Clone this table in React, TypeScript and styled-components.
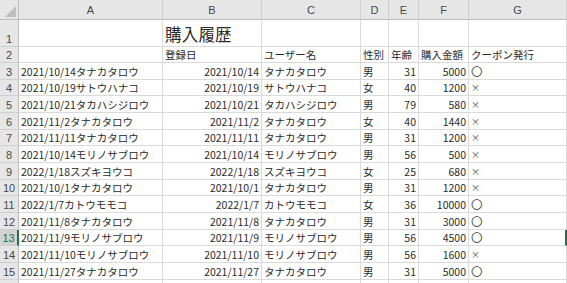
import React from 'react';
import styled, { createGlobalStyle, css } from 'styled-components';

const GlobalStyle = createGlobalStyle`
  html, body {
    margin: 0;
    padding: 0;
    background: #ffffff;
    overflow: hidden;
  }
  body {
    font-family: "Noto Sans CJK JP", "Liberation Sans", sans-serif;
  }
`;

type Align = 'left' | 'right' | 'center';

const ROW_H = 16.67;

const Sheet = styled.div`
  display: grid;
  grid-template-columns: 19px 144px 99px 99px 28px 30px 50px 98px 40px;
  grid-template-rows: 20px 27px 16px repeat(13, ${ROW_H}px) 10px;
  width: 567px;
  height: 283px;
  overflow: hidden;
  font-size: 10.5px;
  color: #2a2a2a;
`;

const Corner = styled.div`
  background: #e6e6e6;
  border-right: 1px solid #bdbdbd;
  border-bottom: 1px solid #bdbdbd;
  display: flex;
  align-items: flex-end;
  justify-content: flex-end;
  padding: 0 2px 2px 0;
  box-sizing: border-box;
`;

const ColHead = styled.div`
  background: #e6e6e6;
  border-right: 1px solid #cfcfcf;
  border-bottom: 1px solid #bdbdbd;
  display: flex;
  align-items: center;
  justify-content: center;
  color: #4a4a4a;
  font-family: "Liberation Sans", sans-serif;
  font-size: 11px;
  box-sizing: border-box;
`;

const RowHead = styled.div<{ $active?: boolean }>`
  background: #e6e6e6;
  border-right: 1px solid #bdbdbd;
  border-bottom: 1px solid #cfcfcf;
  display: flex;
  align-items: flex-end;
  justify-content: center;
  padding-bottom: 1px;
  color: #4a4a4a;
  font-family: "Liberation Sans", sans-serif;
  font-size: 11px;
  box-sizing: border-box;
  ${({ $active }) =>
    $active &&
    css`
      background: #d2d2d2;
      color: #217346;
      border-right: 2px solid #217346;
    `}
`;

const Cell = styled.div<{ $align?: Align; $edge?: boolean }>`
  border-right: 1px solid #dadada;
  border-bottom: 1px solid #dadada;
  display: flex;
  align-items: flex-end;
  justify-content: ${({ $align }) =>
    $align === 'right' ? 'flex-end' : $align === 'center' ? 'center' : 'flex-start'};
  padding: 0 2px 0 2px;
  white-space: nowrap;
  overflow: visible;
  line-height: 15px;
  box-sizing: border-box;
  ${({ $edge }) =>
    $edge &&
    css`
      border-right: 2px solid #217346;
    `}
`;

const Title = styled.span`
  font-size: 16.5px;
  line-height: 24px;
  letter-spacing: 0.2px;
  color: #2a2a2a;
`;

const Mark = styled.span<{ $cross?: boolean }>`
  font-size: ${({ $cross }) => ($cross ? '9px' : '11.5px')};
  line-height: 15px;
  color: #444;
`;

const Tri = () => (
  <svg width="11" height="11" viewBox="0 0 11 11">
    <polygon points="11,0 11,11 0,11" fill="#bfbfbf" />
  </svg>
);

type Rec = [string, string, '男' | '女', number, number, boolean];

const rows: Rec[] = [
  ['2021/10/14', 'タナカタロウ', '男', 31, 5000, true],
  ['2021/10/19', 'サトウハナコ', '女', 40, 1200, false],
  ['2021/10/21', 'タカハシジロウ', '男', 79, 580, false],
  ['2021/11/2', 'タナカタロウ', '女', 40, 1440, false],
  ['2021/11/11', 'タナカタロウ', '男', 31, 1200, false],
  ['2021/10/14', 'モリノサブロウ', '男', 56, 500, false],
  ['2022/1/18', 'スズキヨウコ', '女', 25, 680, false],
  ['2021/10/1', 'タナカタロウ', '男', 31, 1200, false],
  ['2022/1/7', 'カトウモモコ', '女', 36, 10000, true],
  ['2021/11/8', 'タナカタロウ', '男', 31, 3000, true],
  ['2021/11/9', 'モリノサブロウ', '男', 56, 4500, true],
  ['2021/11/10', 'モリノサブロウ', '男', 56, 1600, false],
  ['2021/11/27', 'タナカタロウ', '男', 31, 5000, true],
];

const cols = ['A', 'B', 'C', 'D', 'E', 'F', 'G'];

export default function App() {
  return (
    <>
      <GlobalStyle />
      <Sheet>
        <Corner>
          <Tri />
        </Corner>
        {cols.map((c) => (
          <ColHead key={c}>{c}</ColHead>
        ))}
        <ColHead />

        <RowHead>1</RowHead>
        <Cell />
        <Cell>
          <Title>購入履歴</Title>
        </Cell>
        <Cell />
        <Cell />
        <Cell />
        <Cell />
        <Cell />
        <Cell />

        <RowHead>2</RowHead>
        <Cell />
        <Cell>登録日</Cell>
        <Cell>ユーザー名</Cell>
        <Cell>性別</Cell>
        <Cell>年齢</Cell>
        <Cell>購入金額</Cell>
        <Cell>クーポン発行</Cell>
        <Cell />

        {rows.map(([date, name, sex, age, amount, coupon], i) => {
          const n = i + 3;
          const active = n === 13;
          return (
            <React.Fragment key={n}>
              <RowHead $active={active}>{n}</RowHead>
              <Cell>
                {date}
                {name}
              </Cell>
              <Cell $align="right">{date}</Cell>
              <Cell>{name}</Cell>
              <Cell>{sex}</Cell>
              <Cell $align="right">{age}</Cell>
              <Cell $align="right">{amount}</Cell>
              <Cell $edge={active}>
                <Mark $cross={!coupon}>{coupon ? '〇' : '×'}</Mark>
              </Cell>
              <Cell />
            </React.Fragment>
          );
        })}

        <RowHead />
        {cols.map((c) => (
          <Cell key={c} />
        ))}
        <Cell />
      </Sheet>
    </>
  );
}
